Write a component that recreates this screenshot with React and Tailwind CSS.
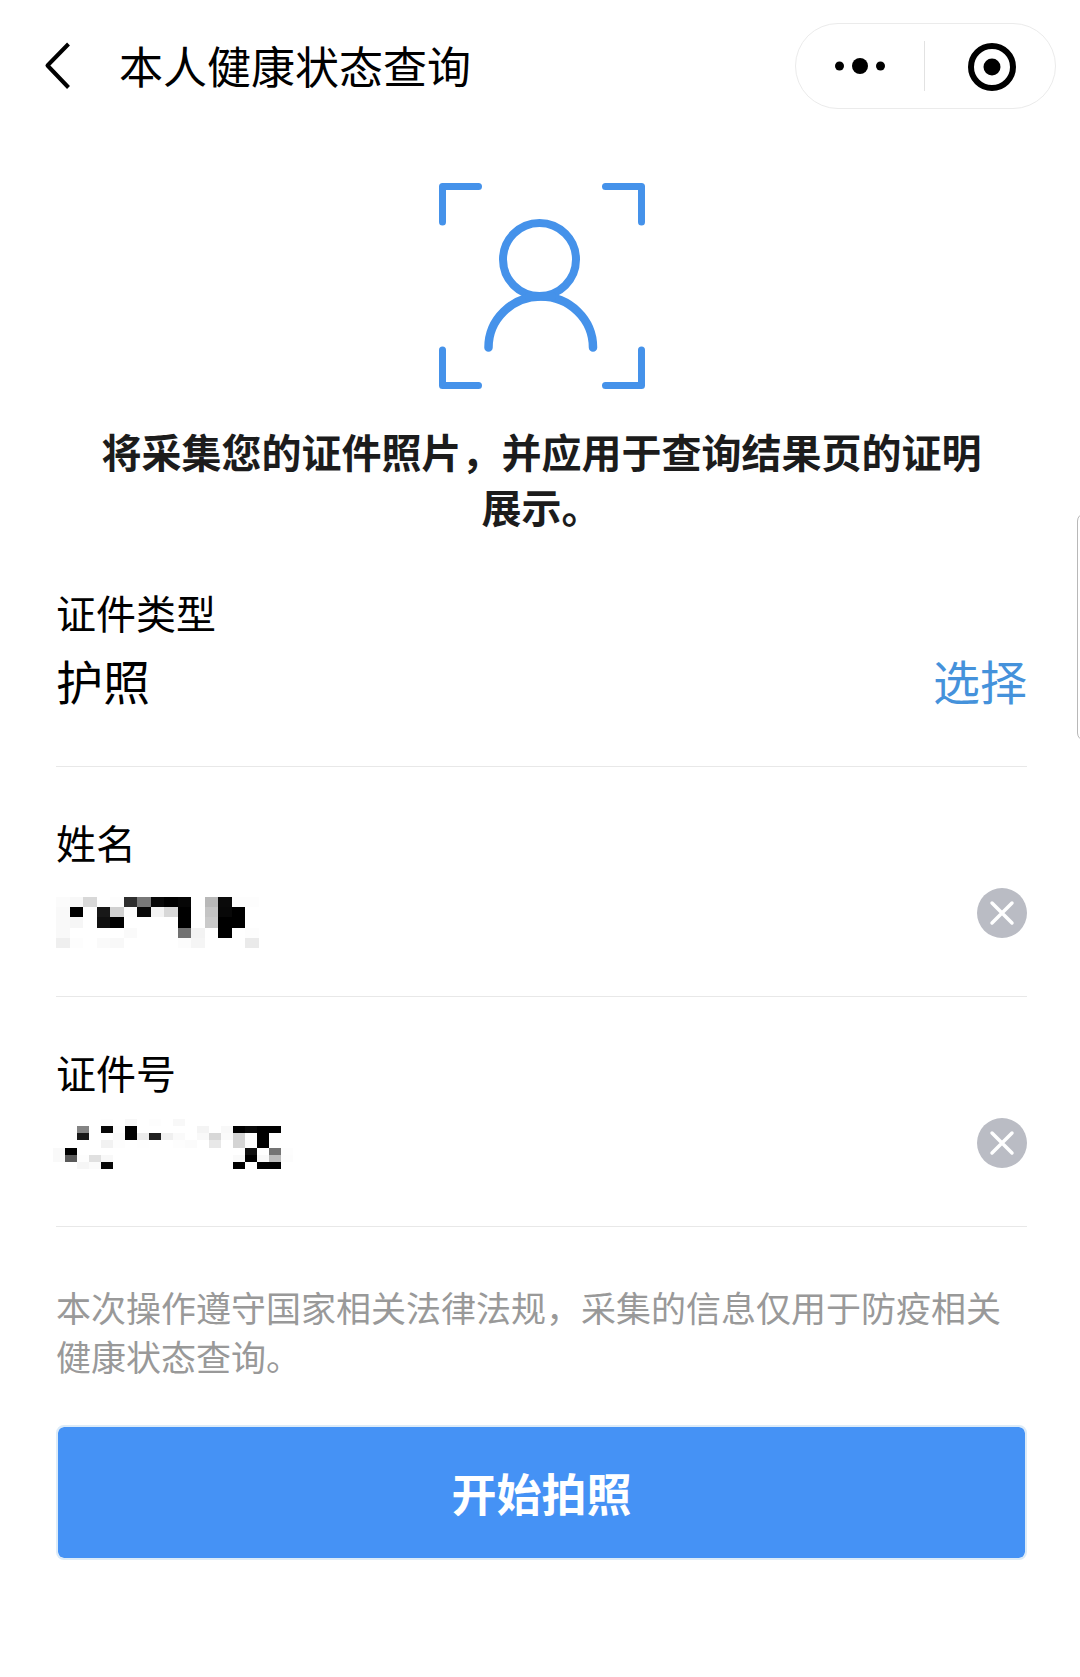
import React, { useState } from 'react';

// Cada par hexadecimal es el gris de una celda; ".." queda vacía
const mosaicoNombre = [
  'fbf8d8..fd2e78080006..b80afdfd',
  'f900..18d0fd08f4d800..c40800..',
  'f9f6..1000........00..ca0000..',
  'f9........fa......72f3..00..fd',
  'effd..faf8........fcf5......ea',
];

const mosaicoNumero = [
  '........fd..f7..fd..f8..................',
  '....84..08fd00..........f4..f8000a0000..',
  '....18....fa00ec20f0fa..f9d8fad4..00....',
  '........f2fd..fe....fdfb..e8..d4fc00....',
  'f900............................10..74fd',
  'f95afde0f8....................fa00f9bcfc',
  '....f6fb08....................00..0000..',
];

function Mosaico({ filas, className }) {
  const columnas = filas[0].length / 2;

  return (
    <svg
      viewBox={`0 0 ${columnas} ${filas.length}`}
      preserveAspectRatio="none"
      shapeRendering="crispEdges"
      aria-hidden="true"
      className={`pointer-events-none absolute ${className}`}
    >
      {filas.map((fila, y) =>
        fila.match(/../g).map((tono, x) =>
          tono === '..' ? null : (
            <rect key={`${x}-${y}`} x={x} y={y} width="1" height="1" fill={`#${tono}${tono}${tono}`} />
          )
        )
      )}
    </svg>
  );
}

function Encabezado() {
  return (
    <header className="flex h-[132px] items-center pr-6 pl-10">
      <button type="button" aria-label="返回" className="flex h-16 w-10 items-center">
        <svg width="36" height="50" viewBox="0 0 36 50" fill="none" stroke="#000" strokeWidth="4" strokeLinejoin="round">
          <path d="M28.5 3 7.5 24.5 28.5 46.5" />
        </svg>
      </button>
      <h1 className="ml-[39px] flex-1 pb-[3px] text-[44px] leading-[60px]">本人健康状态查询</h1>

      <div className="flex h-[86px] w-[261px] items-center rounded-full border border-[#ebebeb]">
        <button type="button" aria-label="更多" className="flex h-full flex-1 items-center justify-center">
          <svg width="52" height="20" viewBox="0 0 52 20">
            <circle cx="5.5" cy="10" r="4.5" />
            <circle cx="26" cy="10" r="8" />
            <circle cx="46.5" cy="10" r="4.5" />
          </svg>
        </button>
        <span className="h-[50px] w-px bg-[#e2e2e2]" />
        <button type="button" aria-label="关闭" className="flex h-full w-[130px] items-center justify-center pt-0.5 pl-1">
          <svg width="48" height="48" viewBox="0 0 48 48">
            <circle cx="24" cy="24" r="21" fill="none" stroke="#000" strokeWidth="6" />
            <circle cx="24" cy="24" r="8.5" />
          </svg>
        </button>
      </div>
    </header>
  );
}

function IconoRostro() {
  return (
    <svg
      width="206"
      height="206"
      viewBox="0 0 206 206"
      fill="none"
      stroke="#4592ea"
      strokeWidth="7"
      strokeLinecap="round"
      strokeLinejoin="round"
      className="mx-auto mt-[51px]"
    >
      <path d="M3.5 39V3.5H39.5M166.5 3.5H202.5V39M202.5 167V202.5H166.5M39.5 202.5H3.5V167" />
      <circle cx="100.5" cy="76.5" r="36.5" strokeWidth="8" />
      <path d="M49.5 164.500A52.250 51 0 0 1 154 164.500" strokeWidth="8.500" />
      <path d="M90 113.500H113" strokeWidth="8" />
    </svg>
  );
}

function CampoTexto({ id, etiqueta, filas, claseMosaico }) {
  const [valor, setValor] = useState('');
  const [oculto, setOculto] = useState(true);

  const limpiar = () => {
    setValor('');
    setOculto(false);
  };

  return (
    <div className="border-b border-[#e8e8e8] pt-[45px] pb-[53px]">
      <label htmlFor={id} className="block text-[40px] leading-[60px]">
        {etiqueta}
      </label>
      <div className="relative mt-[11px] flex h-[60px] items-center">
        <input
          id={id}
          type="text"
          value={valor}
          onChange={(e) => setValor(e.target.value)}
          className="h-full min-w-0 flex-1 bg-transparent text-[47px] outline-none"
        />
        {oculto && <Mosaico filas={filas} className={claseMosaico} />}
        <button type="button" onClick={limpiar} aria-label={`清除${etiqueta}`}>
          <svg width="50" height="50" viewBox="0 0 50 50">
            <circle cx="25" cy="25" r="25" fill="#babcc4" />
            <path d="m15 15 20 20M35 15 15 35" stroke="#fff" strokeWidth="3.5" strokeLinecap="round" />
          </svg>
        </button>
      </div>
    </div>
  );
}

function App() {
  return (
    <div className="relative min-h-screen overflow-x-hidden bg-white font-['Noto_Sans_CJK_SC',sans-serif] text-black">
      <Encabezado />

      <main className="pr-[53px] pb-16 pl-14">
        <IconoRostro />
        <p className="mt-[35px] px-10 text-center text-[40px] leading-[55px] font-bold text-[#1c1c1c]">
          将采集您的证件照片，并应用于查询结果页的证明展示。
        </p>

        <form onSubmit={(e) => e.preventDefault()} className="mt-[3px]">
          <div className="border-b border-[#e8e8e8] pt-[45px] pb-14">
            <h2 className="text-[40px] leading-[60px]">证件类型</h2>
            <div className="mt-2 flex h-[60px] items-center justify-between text-[47px] leading-[60px]">
              <span>护照</span>
              <button type="button" className="text-[#4592db]">选择</button>
            </div>
          </div>

          <CampoTexto
            id="nombre"
            etiqueta="姓名"
            filas={mosaicoNombre}
            claseMosaico="top-[14px] left-0 h-[51px] w-[203px]"
          />
          <CampoTexto
            id="numero"
            etiqueta="证件号"
            filas={mosaicoNumero}
            claseMosaico="top-1.5 -left-[3px] h-[50px] w-[240px]"
          />

          <p className="mt-[55px] text-[35px] leading-[49px] text-[#999999]">
            本次操作遵守国家相关法律法规，采集的信息仅用于防疫相关健康状态查询。
          </p>

          <button
            type="submit"
            className="mt-[45px] h-[135px] w-full rounded-lg border-2 border-[#dcebf8] bg-[#4592f5] bg-clip-padding text-[45px] font-bold text-white"
          >
            开始拍照
          </button>
        </form>
      </main>

      {/* Panel lateral que asoma por el borde derecho */}
      <div className="absolute top-[513px] -right-3 h-[228px] w-[15px] rounded-l-lg border border-[#b8b8b8] bg-white" />
    </div>
  );
}

export default App;
